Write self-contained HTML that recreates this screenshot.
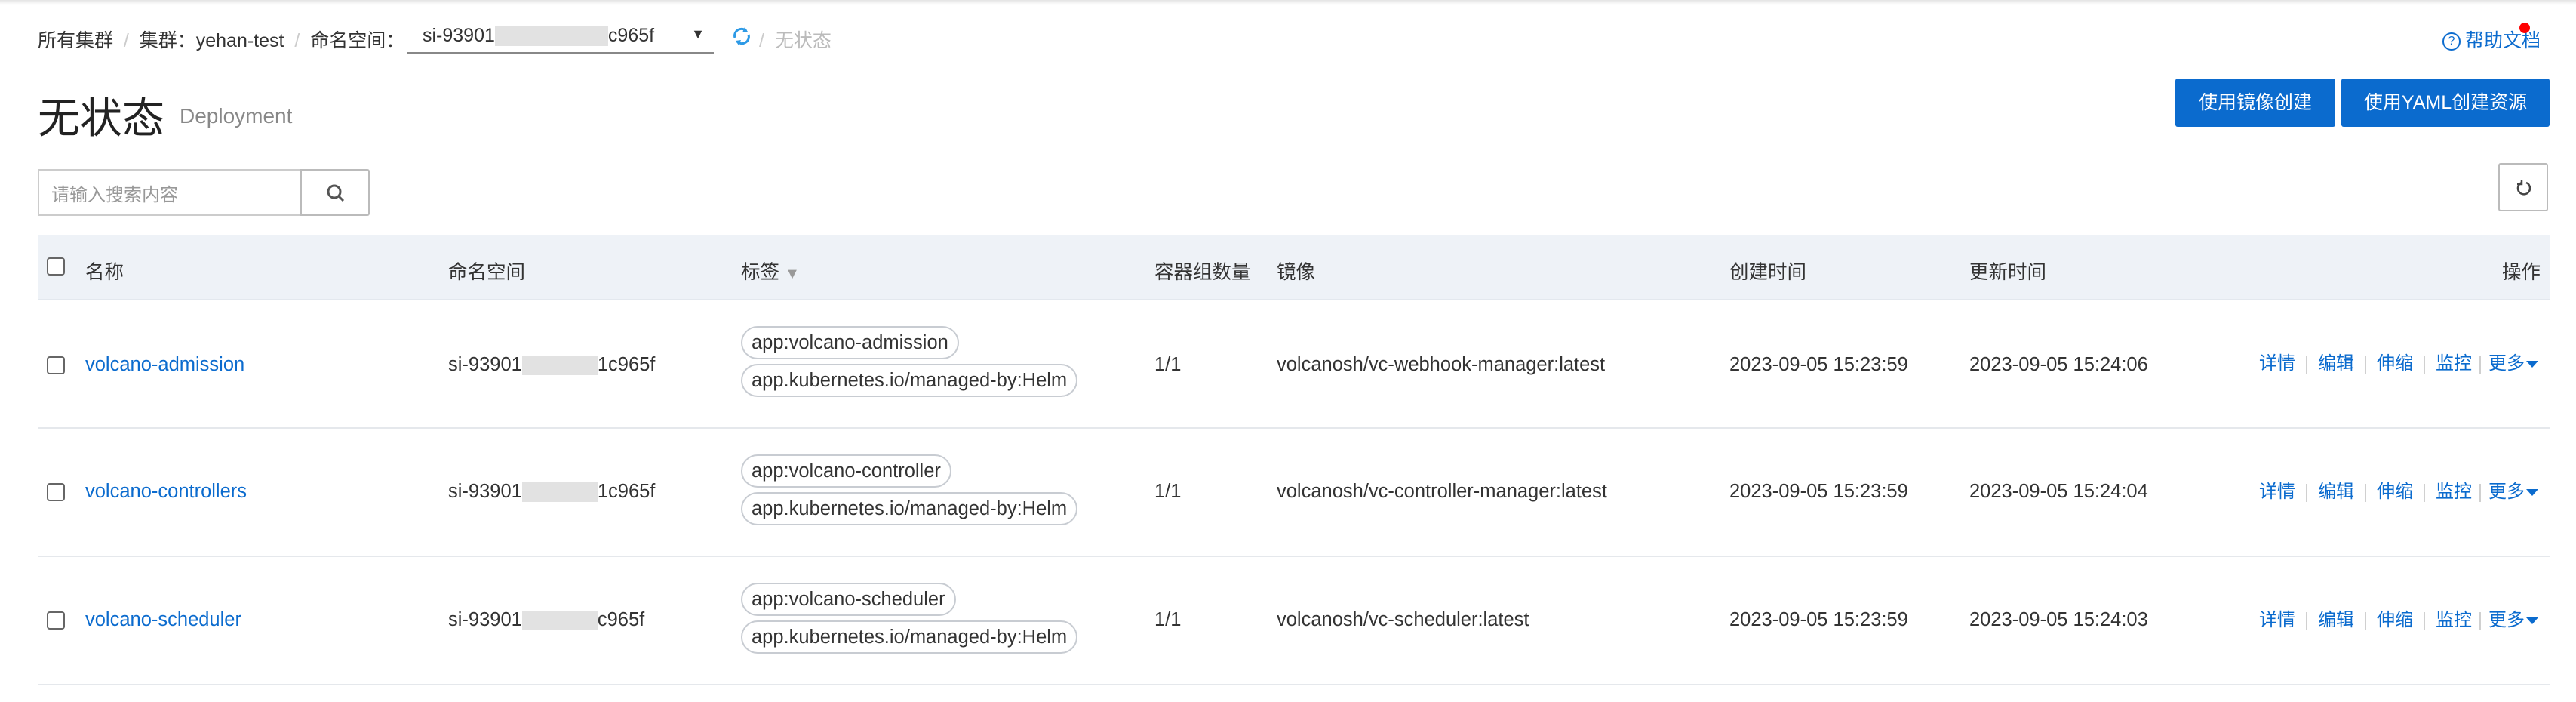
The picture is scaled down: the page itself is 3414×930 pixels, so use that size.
<!DOCTYPE html>
<html><head><meta charset="utf-8"><style>
*{margin:0;padding:0;box-sizing:border-box}
body{width:3414px;height:930px;background:#fff;font-family:"Liberation Sans","Noto Sans CJK SC",sans-serif;color:#333;position:relative;overflow:hidden;font-size:25.5px}
.a{position:absolute;white-space:nowrap}
.top{position:absolute;left:0;top:0;width:3414px;height:6px;background:linear-gradient(#e4e4e4,#fff)}
.bc{top:34px;font-size:25px;color:#333}
.sep{color:#ccc}
.btn{position:absolute;top:104px;height:64px;background:#0b6bce;color:#fff;border-radius:3px;font-size:25px;line-height:64px;text-align:center}
.hdr{position:absolute;left:50px;top:311px;width:3329px;height:87px;background:#eef2f7;border-bottom:2px solid #e3e8ee}
.th{top:340px;font-size:25.5px;color:#333}
.row{position:absolute;left:50px;width:3329px;border-bottom:2px solid #e5e8ec}
.cb{position:absolute;width:24px;height:24px;border:2px solid #666;border-radius:4px;background:#fff}
.tag{position:absolute;height:44px;border:2px solid #c8ccd2;border-radius:22px;padding:0 12px;line-height:40px;font-size:25.5px;color:#333;background:#fff;white-space:nowrap}
.lk{color:#0b6bce}
.op{font-size:24px;color:#0b6bce;line-height:30px}
.bar{display:inline-block;width:2px;height:24px;background:#d0d0d0;vertical-align:middle;margin:0 14px}
.op svg{vertical-align:middle;margin-left:2px}
</style></head><body>
<div class="top"></div>
<div class="a bc" style="left:50px">所有集群 <span class="sep">&nbsp;/&nbsp;</span> 集群：yehan-test <span class="sep">&nbsp;/&nbsp;</span> 命名空间：</div>
<div class="a" style="left:540px;top:33px;width:406px;height:38px;border-bottom:2px solid #888;font-size:25px;padding-left:20px">si-93901<span style="display:inline-block;width:150px;height:26px;background:#e2e2e2;vertical-align:middle"></span>c965f<span style="position:absolute;right:12px;top:2px;font-size:18px">▼</span></div>
<svg class="a" style="left:970px;top:34px" width="26" height="28" viewBox="0 0 26 28"><path d="M4 16a9 9 0 0 1 15-9" fill="none" stroke="#2d9ae6" stroke-width="3"/><path d="M22 12a9 9 0 0 1-15 9" fill="none" stroke="#2d9ae6" stroke-width="3"/><path d="M17 2l4 6-7 1z" fill="#2d9ae6"/><path d="M9 26l-4-6 7-1z" fill="#2d9ae6"/></svg>
<div class="a bc" style="left:1006px;color:#bbb"><span class="sep">/</span>&nbsp; 无状态</div>
<div class="a" style="left:3237px;top:34px;font-size:25px;color:#0b6bce"><span style="display:inline-block;width:24px;height:24px;border:2px solid #0b6bce;border-radius:50%;font-size:16px;line-height:20px;text-align:center;vertical-align:middle;margin-right:6px">?</span>帮助文档</div>
<div class="a" style="left:3339px;top:30px;width:14px;height:14px;border-radius:50%;background:#f00"></div>
<div class="a" style="left:50px;top:112px;font-size:56px;color:#222">无状态</div>
<div class="a" style="left:238px;top:138px;font-size:28px;color:#888">Deployment</div>
<div class="btn" style="left:2883px;width:212px">使用镜像创建</div>
<div class="btn" style="left:3103px;width:276px">使用YAML创建资源</div>
<div class="a" style="left:50px;top:224px;width:350px;height:62px;border:2px solid #ccc;border-right:none;font-size:24px;color:#999;padding:12px 0 0 16px">请输入搜索内容</div>
<div class="a" style="left:398px;top:224px;width:92px;height:62px;border:2px solid #bbb;border-radius:0 3px 3px 0"><svg style="position:absolute;left:32px;top:17px" width="26" height="26" viewBox="0 0 26 26"><circle cx="11" cy="11" r="8" fill="none" stroke="#555" stroke-width="3"/><path d="M17 17l6 6" stroke="#555" stroke-width="3"/></svg></div>
<div class="a" style="left:3311px;top:216px;width:66px;height:64px;border:2px solid #bbb;border-radius:3px"><svg style="position:absolute;left:20px;top:19px" width="24" height="24" viewBox="0 0 24 24"><path d="M15 5a8 8 0 1 1-6 0" fill="none" stroke="#444" stroke-width="2.5"/><path d="M9 1v6H3" fill="none" stroke="#444" stroke-width="2.5"/></svg></div>
<div class="hdr"></div>
<div class="cb" style="left:62px;top:341px"></div>
<div class="a th" style="left:113px">名称</div>
<div class="a th" style="left:594px">命名空间</div>
<div class="a th" style="left:982px">标签 <span style="color:#999;font-size:20px">▼</span></div>
<div class="a th" style="left:1530px">容器组数量</div>
<div class="a th" style="left:1692px">镜像</div>
<div class="a th" style="left:2292px">创建时间</div>
<div class="a th" style="left:2610px">更新时间</div>
<div class="a th" style="left:3316px">操作</div>

<div class="row" style="top:398px;height:170px"></div>
<div class="row" style="top:568px;height:170px"></div>
<div class="row" style="top:738px;height:170px"></div>

<!-- row 1 -->
<div class="cb" style="left:62px;top:472px"></div>
<div class="a lk" style="left:113px;top:469px">volcano-admission</div>
<div class="a" style="left:594px;top:469px">si-93901<span style="display:inline-block;width:100px;height:26px;background:#e2e2e2;vertical-align:middle"></span>1c965f</div>
<div class="tag" style="left:982px;top:432px">app:volcano-admission</div>
<div class="tag" style="left:982px;top:482px">app.kubernetes.io/managed-by:Helm</div>
<div class="a" style="left:1530px;top:469px">1/1</div>
<div class="a" style="left:1692px;top:469px">volcanosh/vc-webhook-manager:latest</div>
<div class="a" style="left:2292px;top:469px">2023-09-05 15:23:59</div>
<div class="a" style="left:2610px;top:469px">2023-09-05 15:24:06</div>
<div class="a op" style="left:2994px;top:467px">详情<span class="bar"></span>编辑<span class="bar"></span>伸缩<span class="bar"></span>监控<span class="bar" style="margin:0 10px 0 10px"></span>更多<svg width="16" height="10" viewBox="0 0 16 10"><path d="M0 0h16L8 9z" fill="#0b6bce"/></svg></div>

<!-- row 2 -->
<div class="cb" style="left:62px;top:640px"></div>
<div class="a lk" style="left:113px;top:637px">volcano-controllers</div>
<div class="a" style="left:594px;top:637px">si-93901<span style="display:inline-block;width:100px;height:26px;background:#e2e2e2;vertical-align:middle"></span>1c965f</div>
<div class="tag" style="left:982px;top:602px">app:volcano-controller</div>
<div class="tag" style="left:982px;top:652px">app.kubernetes.io/managed-by:Helm</div>
<div class="a" style="left:1530px;top:637px">1/1</div>
<div class="a" style="left:1692px;top:637px">volcanosh/vc-controller-manager:latest</div>
<div class="a" style="left:2292px;top:637px">2023-09-05 15:23:59</div>
<div class="a" style="left:2610px;top:637px">2023-09-05 15:24:04</div>
<div class="a op" style="left:2994px;top:637px">详情<span class="bar"></span>编辑<span class="bar"></span>伸缩<span class="bar"></span>监控<span class="bar" style="margin:0 10px 0 10px"></span>更多<svg width="16" height="10" viewBox="0 0 16 10"><path d="M0 0h16L8 9z" fill="#0b6bce"/></svg></div>

<!-- row 3 -->
<div class="cb" style="left:62px;top:810px"></div>
<div class="a lk" style="left:113px;top:807px">volcano-scheduler</div>
<div class="a" style="left:594px;top:807px">si-93901<span style="display:inline-block;width:100px;height:26px;background:#e2e2e2;vertical-align:middle"></span>c965f</div>
<div class="tag" style="left:982px;top:772px">app:volcano-scheduler</div>
<div class="tag" style="left:982px;top:822px">app.kubernetes.io/managed-by:Helm</div>
<div class="a" style="left:1530px;top:807px">1/1</div>
<div class="a" style="left:1692px;top:807px">volcanosh/vc-scheduler:latest</div>
<div class="a" style="left:2292px;top:807px">2023-09-05 15:23:59</div>
<div class="a" style="left:2610px;top:807px">2023-09-05 15:24:03</div>
<div class="a op" style="left:2994px;top:807px">详情<span class="bar"></span>编辑<span class="bar"></span>伸缩<span class="bar"></span>监控<span class="bar" style="margin:0 10px 0 10px"></span>更多<svg width="16" height="10" viewBox="0 0 16 10"><path d="M0 0h16L8 9z" fill="#0b6bce"/></svg></div>
</body></html>
